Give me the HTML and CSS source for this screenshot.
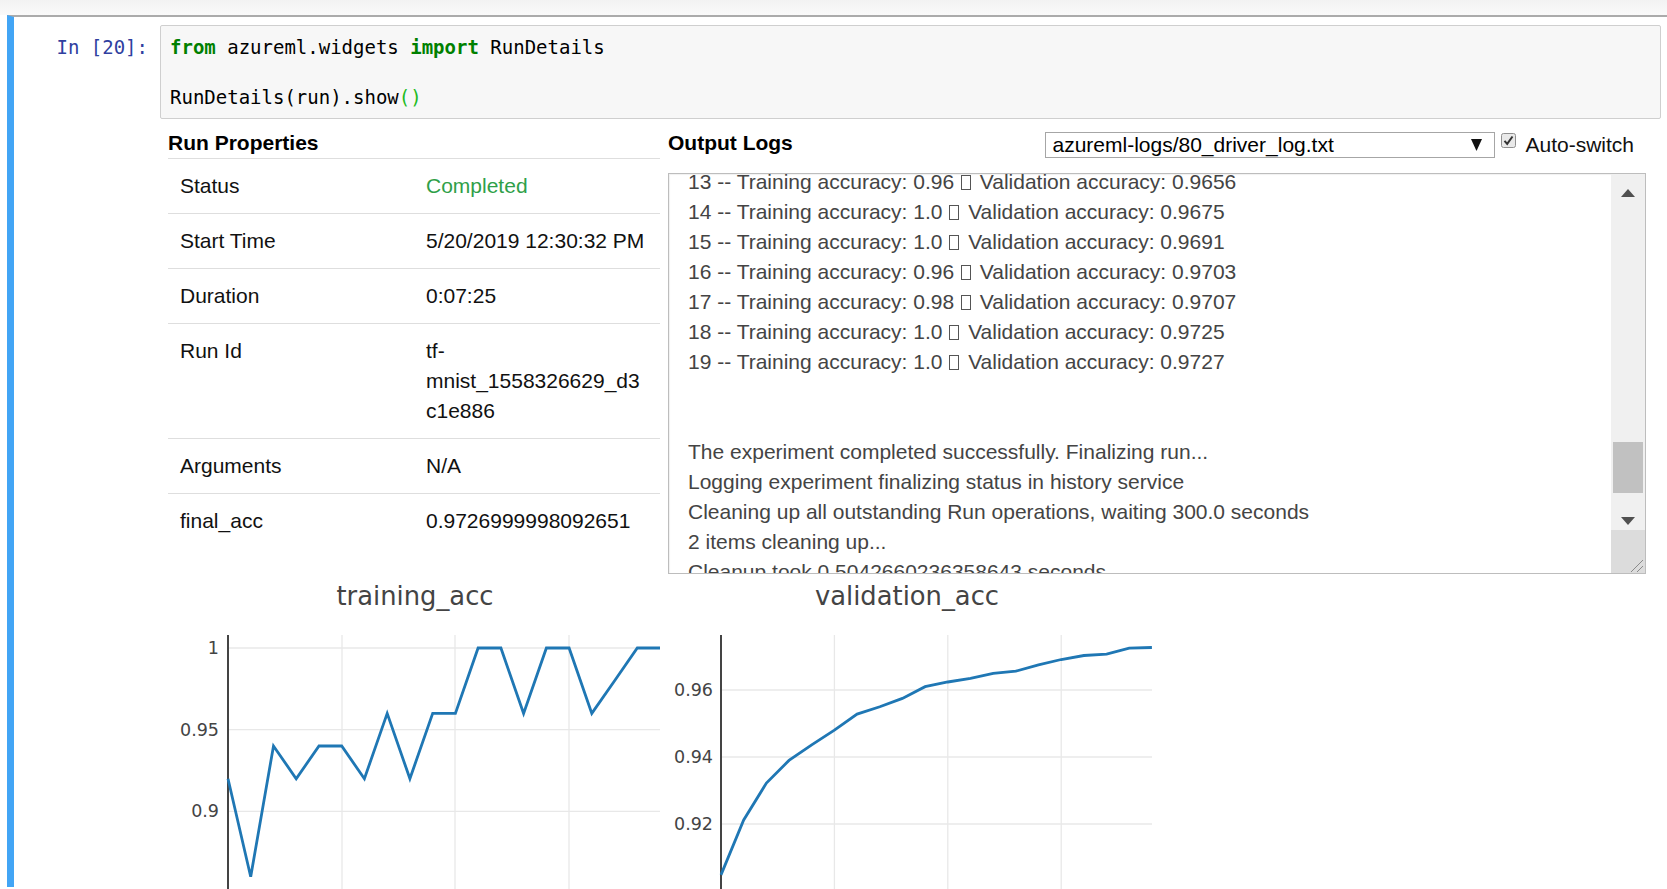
FILE: index.html
```html
<!DOCTYPE html>
<html>
<head>
<meta charset="utf-8">
<title>RunDetails</title>
<link rel="stylesheet" href="styles.css">
</head>
<body>
<div class="topbar"></div>
<div class="cell">
  <div class="input">
    <div class="prompt">In&nbsp;[20]:</div>
    <div class="code">
      <div class="cline"><span class="kw">from</span> azureml.widgets <span class="kw">import</span> RunDetails</div>
      <div class="cline">&nbsp;</div>
      <div class="cline">RunDetails(run).show<span class="br">()</span></div>
    </div>
  </div>
  <div class="output">
    <div class="widget">
      <section class="props">
        <div class="head">Run Properties</div>
        <div class="row"><div class="k">Status</div><div class="v ok">Completed</div></div>
        <div class="row"><div class="k">Start Time</div><div class="v">5/20/2019 12:30:32 PM</div></div>
        <div class="row"><div class="k">Duration</div><div class="v">0:07:25</div></div>
        <div class="row"><div class="k">Run Id</div><div class="v">tf-mnist_1558326629_d3c1e886</div></div>
        <div class="row"><div class="k">Arguments</div><div class="v">N/A</div></div>
        <div class="row"><div class="k">final_acc</div><div class="v">0.9726999998092651</div></div>
      </section>
      <section class="logs">
        <div class="logs-head">
          <div class="head">Output Logs</div>
          <div class="controls">
            <div class="select"><span>azureml-logs/80_driver_log.txt</span><svg class="arrow" width="11" height="12" viewBox="0 0 11 12"><polygon points="0,0 11,0 5.5,12" fill="#111"/></svg></div>
            <svg class="check" width="15" height="15" viewBox="0 0 15 15"><rect x="0.5" y="0.5" width="14" height="14" rx="2" fill="#e9e9e9" stroke="#8f8f8f"/><path d="M3.5 7.8 L6.2 10.8 L11.5 3.5" fill="none" stroke="#333" stroke-width="2"/></svg>
            <span class="autolabel">Auto-switch</span>
          </div>
        </div>
        <div class="logbox">
          <div class="logtext">
            <div class="l">13 -- Training accuracy: 0.96 <span class="tab"></span> Validation accuracy: 0.9656</div>
            <div class="l">14 -- Training accuracy: 1.0 <span class="tab"></span> Validation accuracy: 0.9675</div>
            <div class="l">15 -- Training accuracy: 1.0 <span class="tab"></span> Validation accuracy: 0.9691</div>
            <div class="l">16 -- Training accuracy: 0.96 <span class="tab"></span> Validation accuracy: 0.9703</div>
            <div class="l">17 -- Training accuracy: 0.98 <span class="tab"></span> Validation accuracy: 0.9707</div>
            <div class="l">18 -- Training accuracy: 1.0 <span class="tab"></span> Validation accuracy: 0.9725</div>
            <div class="l">19 -- Training accuracy: 1.0 <span class="tab"></span> Validation accuracy: 0.9727</div>
            <div class="l"></div>
            <div class="l"></div>
            <div class="l">The experiment completed successfully. Finalizing run...</div>
            <div class="l">Logging experiment finalizing status in history service</div>
            <div class="l">Cleaning up all outstanding Run operations, waiting 300.0 seconds</div>
            <div class="l">2 items cleaning up...</div>
            <div class="l">Cleanup took 0.5042660236358643 seconds</div>
          </div>
          <svg class="scroll" width="34" height="399" viewBox="0 0 34 399">
            <rect x="0" y="0" width="34" height="399" fill="#f0f0f0"/>
            <polygon points="10,23 24,23 17,15" fill="#505050"/>
            <rect x="2" y="268" width="30" height="51" fill="#c1c1c1"/>
            <polygon points="10,343 24,343 17,351" fill="#505050"/>
            <rect x="0" y="356" width="34" height="43" fill="#dcdcdc"/>
            <line x1="20" y1="398" x2="32" y2="386" stroke="#8a8a8a" stroke-width="1"/>
            <line x1="26" y1="398" x2="32" y2="392" stroke="#8a8a8a" stroke-width="1"/>
          </svg>
        </div>
      </section>
      <svg class="chart" width="492" height="315" viewBox="0 0 492 315">
        <text class="ctitle" x="247" y="31" text-anchor="middle">training_acc</text>
        <g class="grid">
          <line x1="174" y1="61" x2="174" y2="315"/>
          <line x1="287" y1="61" x2="287" y2="315"/>
          <line x1="401" y1="61" x2="401" y2="315"/>
          <line x1="60" y1="74" x2="492" y2="74"/>
          <line x1="60" y1="155.7" x2="492" y2="155.7"/>
          <line x1="60" y1="237.4" x2="492" y2="237.4"/>
        </g>
        <g class="ticks">
          <text x="51" y="80" text-anchor="end">1</text>
          <text x="51" y="161.7" text-anchor="end">0.95</text>
          <text x="51" y="243.4" text-anchor="end">0.9</text>
        </g>
        <line class="axis" x1="60" y1="61" x2="60" y2="315"/>
        <polyline class="trace" points="60,204.7 82.7,302.8 105.5,172 128.2,204.7 151,172 173.7,172 196.4,204.7 219.2,139.4 241.9,204.7 264.7,139.4 287.4,139.4 310.1,74 332.9,74 355.6,139.4 378.4,74 401.1,74 423.8,139.4 446.6,106.7 469.3,74 492,74"/>
      </svg>
      <svg class="chart" width="490" height="315" viewBox="0 0 490 315">
        <text class="ctitle" x="239" y="31" text-anchor="middle">validation_acc</text>
        <g class="grid">
          <line x1="166.4" y1="61" x2="166.4" y2="315"/>
          <line x1="279.8" y1="61" x2="279.8" y2="315"/>
          <line x1="393.2" y1="61" x2="393.2" y2="315"/>
          <line x1="53" y1="116" x2="484" y2="116"/>
          <line x1="53" y1="183" x2="484" y2="183"/>
          <line x1="53" y1="250" x2="484" y2="250"/>
        </g>
        <g class="ticks">
          <text x="45" y="122" text-anchor="end">0.96</text>
          <text x="45" y="189" text-anchor="end">0.94</text>
          <text x="45" y="256" text-anchor="end">0.92</text>
        </g>
        <line class="axis" x1="53" y1="61" x2="53" y2="315"/>
        <polyline class="trace" points="53,300.9 75.7,246 98.4,209.1 121,186.4 143.7,170.9 166.4,156.2 189.1,140.1 211.8,132.8 234.4,124.4 257.1,112.7 279.8,108 302.5,104.3 325.2,99.3 347.8,97.2 370.5,90.9 393.2,85.5 415.9,81.5 438.6,80.2 461.2,74.1 483.9,73.5"/>
      </svg>
    </div>
  </div>
</div>
</body>
</html>
```

FILE: styles.css
```css
html, body {
  margin: 0;
  padding: 0;
  background: #fff;
  height: 889px;
  overflow: hidden;
}
body {
  font-family: "Liberation Sans", Arial, sans-serif;
  color: #000;
}
.topbar {
  height: 15px;
  background: linear-gradient(#f2f2f2, #fafafa);
}
.cell {
  margin-left: 7px;
  border-top: 2px solid #ababab;
  border-left: 7px solid #42a5f5;
  height: 872px;
  box-sizing: border-box;
}
.input {
  display: flex;
  padding: 8px 6px 0 0;
}
.prompt {
  width: 146px;
  box-sizing: border-box;
  padding: 10px 12px 0 0;
  text-align: right;
  font-family: "DejaVu Sans Mono", "Liberation Mono", monospace;
  font-size: 19px;
  line-height: 25px;
  color: #303f9f;
}
.code {
  flex: 1;
  background: #f7f7f7;
  border: 1px solid #cfcfcf;
  border-radius: 2px;
  padding: 9px 9px 8px 9px;
  font-family: "DejaVu Sans Mono", "Liberation Mono", monospace;
  font-size: 19px;
  line-height: 25px;
  color: #000;
}
.kw {
  color: #008000;
  font-weight: bold;
}
.br {
  color: #22bb22;
}
.output {
  margin-left: 146px;
}
.widget {
  display: grid;
  grid-template-columns: 492px 978px;
  column-gap: 8px;
  padding: 9px 0 0 8px;
}
.head {
  font-weight: bold;
  font-size: 21px;
  line-height: 30px;
  height: 30px;
}
.props .row {
  display: flex;
  border-top: 1px solid #dedede;
  font-size: 21px;
  line-height: 30px;
}
.props .k,
.props .v {
  width: 50%;
  box-sizing: border-box;
  padding: 12px 13px 12px 12px;
  overflow-wrap: anywhere;
}
.props .k {
  color: #111;
}
.props .v {
  color: #111;
}
.props .v.ok {
  color: #2f9f49;
}
.logs-head {
  display: flex;
  height: 30px;
  align-items: flex-start;
}
.controls {
  margin-left: auto;
  margin-top: 4px;
  padding-right: 12px;
  display: flex;
  align-items: flex-start;
}
.select {
  width: 450px;
  height: 26px;
  box-sizing: border-box;
  border: 1px solid #a6a6a6;
  background: #fff;
  display: flex;
  align-items: center;
  padding: 0 12px 0 6px;
  font-size: 21px;
  line-height: 24px;
  color: #000;
}
.select .arrow {
  margin-left: auto;
}
.check {
  margin: 1px 0 0 6px;
}
.autolabel {
  margin: 1px 0 0 9px;
  font-size: 21px;
  line-height: 24px;
  color: #111;
}
.logbox {
  margin-top: 15px;
  height: 401px;
  box-sizing: border-box;
  border: 1px solid #bdbdbd;
  box-shadow: inset 1px 1px 1px rgba(0, 0, 0, 0.06);
  display: flex;
  overflow: hidden;
}
.logtext {
  flex: 1;
  overflow: hidden;
  padding-left: 19px;
  font-size: 21px;
  line-height: 30px;
  color: #444;
  white-space: nowrap;
}
.logtext .l {
  height: 30px;
}
.logtext .l:first-child {
  margin-top: -7px;
}
.tab {
  display: inline-block;
  width: 8px;
  height: 13px;
  margin: 0 3px 0 1px;
  border: 1px solid #555;
  vertical-align: -1px;
}
.scroll {
  display: block;
  flex: none;
}
.chart {
  display: block;
  overflow: visible;
}
.ctitle {
  font-family: "DejaVu Sans", Verdana, sans-serif;
  font-size: 25.8px;
  fill: #444;
}
.ticks text {
  font-family: "DejaVu Sans", Verdana, sans-serif;
  font-size: 17.5px;
  fill: #444;
}
.grid line {
  stroke: #e8e8e8;
  stroke-width: 1.3;
}
.axis {
  stroke: #444;
  stroke-width: 2;
}
.trace {
  fill: none;
  stroke: #1f77b4;
  stroke-width: 2.8;
}
```
